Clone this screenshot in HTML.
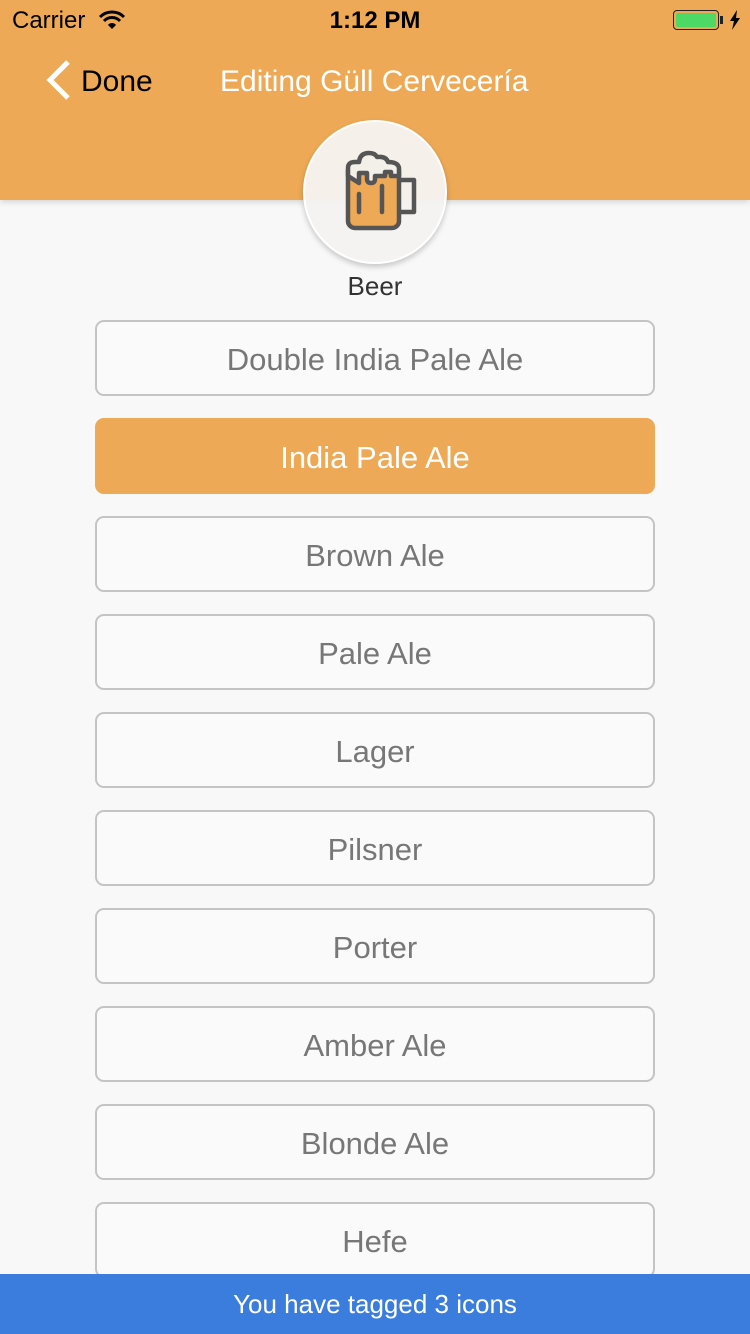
<!DOCTYPE html>
<html><head><meta charset="utf-8"><style>
*{margin:0;padding:0;box-sizing:border-box}
body{width:750px;height:1334px;background:#f8f8f8;font-family:"Liberation Sans",sans-serif;position:relative;overflow:hidden}
.hdr{position:absolute;left:0;top:0;width:750px;height:200px;background:#eda955;box-shadow:0 2px 6px rgba(0,0,0,.15)}
.sb{position:absolute;top:7px;font-size:24px;color:#000}
.btn{position:absolute;left:95px;width:560px;height:76px;border:2px solid #c4c4c4;border-radius:9px;background:#fafafa;color:#777;font-size:31px;text-align:center;line-height:76px}
.btn.on{background:#eda955;border-color:#eda955;color:#fff}
</style></head><body>
<div class="hdr">
<div class="sb" style="left:12px">Carrier</div>
<svg style="position:absolute;left:98px;top:10px" width="28" height="20" viewBox="0 0 28 20"><path d="M2 7a17 17 0 0 1 24 0" stroke="#000" stroke-width="3" fill="none"/><path d="M6 11a11 11 0 0 1 16 0" stroke="#000" stroke-width="3" fill="none"/><path d="M10 15a5 5 0 0 1 8 0L14 19z" fill="#000"/></svg>
<div class="sb" style="left:0;width:750px;text-align:center;font-weight:bold">1:12 PM</div>
<div style="position:absolute;left:673px;top:10px;width:46px;height:20px;border:1.5px solid #222;border-radius:4px;padding:2px"><div style="width:100%;height:100%;background:#4cd964;border-radius:2px"></div></div>
<div style="position:absolute;left:720px;top:16px;width:3px;height:8px;background:#222"></div>
<svg style="position:absolute;left:729px;top:10px" width="12" height="20" viewBox="0 0 12 20"><path d="M8 0L1 11h4l-2 9 8-12H7z" fill="#000"/></svg>
<svg style="position:absolute;left:44px;top:59px" width="28" height="42" viewBox="0 0 28 42"><path d="M24 3L6 21L24 39" stroke="#fff" stroke-width="5" fill="none"/></svg>
<div style="position:absolute;left:81px;top:65px;font-size:30px;color:#000">Done</div>
<div style="position:absolute;left:220px;top:65px;font-size:30px;color:#fff">Editing Güll Cervecería</div>
</div>
<div style="position:absolute;left:303px;top:120px;width:144px;height:144px;border-radius:50%;background:rgba(245,243,240,.96);border:2px solid #fff;box-shadow:0 3px 6px rgba(0,0,0,.2)"></div>
<svg style="position:absolute;left:340px;top:150px" width="80" height="82" viewBox="0 0 80 82">
<rect x="8" y="14" width="51" height="64" rx="7" fill="#eda955" stroke="#555" stroke-width="4.5"/>
<path d="M8 26 V18 q0-6 7-6 h4 q1-9 10-9 q6 0 8 4 q9-1 11 5 q10 0 11 6 v8 h-8 v-4 h-6 v4 h-10 v3 q0 4-4 4 q-4 0-4-4 v-6 h-8 v10 z" fill="#f3efe9" stroke="#555" stroke-width="4.5" stroke-linejoin="round"/>
<path d="M59 30h15v32h-15" fill="none" stroke="#555" stroke-width="4.5" stroke-linejoin="round"/>
<path d="M19 44v18M42 36v26" stroke="#555" stroke-width="4.5" stroke-linecap="round"/>
</svg>
<div style="position:absolute;left:0;width:750px;top:271px;text-align:center;font-size:26px;color:#333">Beer</div>
<div class="btn" style="top:320px">Double India Pale Ale</div>
<div class="btn on" style="top:418px">India Pale Ale</div>
<div class="btn" style="top:516px">Brown Ale</div>
<div class="btn" style="top:614px">Pale Ale</div>
<div class="btn" style="top:712px">Lager</div>
<div class="btn" style="top:810px">Pilsner</div>
<div class="btn" style="top:908px">Porter</div>
<div class="btn" style="top:1006px">Amber Ale</div>
<div class="btn" style="top:1104px">Blonde Ale</div>
<div class="btn" style="top:1202px">Hefe</div>
<div style="position:absolute;left:0;top:1274px;width:750px;height:60px;background:#3b7ddd;color:#fff;font-size:26px;text-align:center;line-height:60px">You have tagged 3 icons</div>
</body></html>
